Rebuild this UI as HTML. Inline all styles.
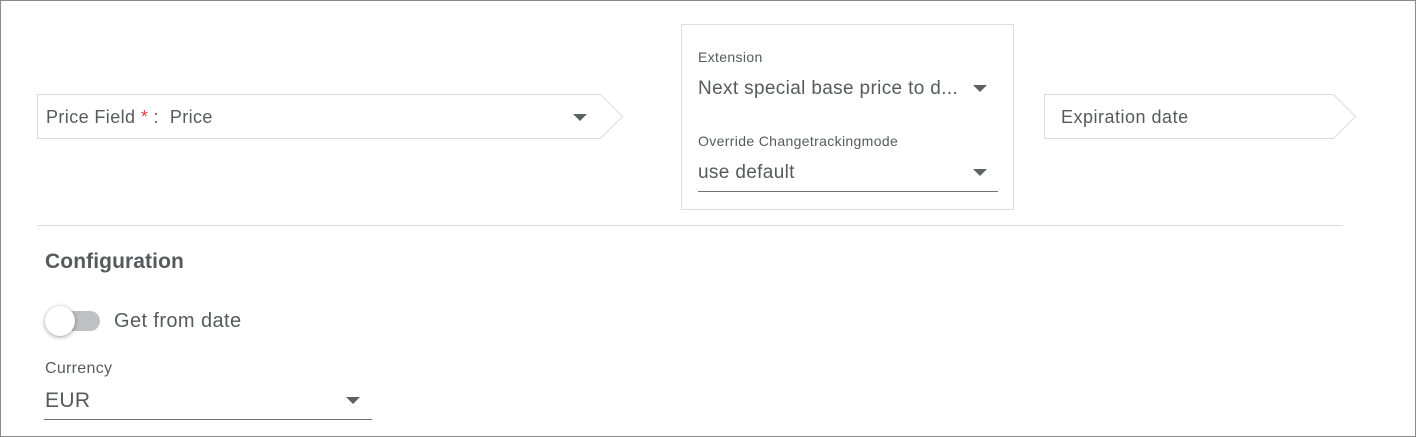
<!DOCTYPE html>
<html><head><style>
body{margin:0;width:1416px;height:437px;position:relative;font-family:"Liberation Sans",sans-serif;color:#555b5b;background:#fff;overflow:hidden}
.frame{position:absolute;left:0;top:0;width:1414px;height:435px;border:1px solid #8a8a8a}
.t{position:absolute;white-space:nowrap;letter-spacing:0.35px}
.caret{position:absolute;width:0;height:0;border-left:7px solid transparent;border-right:7px solid transparent;border-top:7px solid #5a6262}
</style></head><body>
<div class="frame"></div>
<svg width="1416" height="437" style="position:absolute;left:0;top:0">
<polygon points="37.5,94.5 600.5,94.5 622.5,116.5 600.5,138.5 37.5,138.5" fill="#fff" stroke="#dcdcdc"/>
<polygon points="1044.5,94.5 1333.5,94.5 1355.5,116.5 1333.5,138.5 1044.5,138.5" fill="#fff" stroke="#dcdcdc"/>
<rect x="681.5" y="24.5" width="332" height="185" fill="#fff" stroke="#dcdcdc"/>
<line x1="37" y1="225.5" x2="1343" y2="225.5" stroke="#dcdcdc"/>
<line x1="698" y1="191.5" x2="998" y2="191.5" stroke="#6a7272"/>
<line x1="44" y1="419.5" x2="372" y2="419.5" stroke="#6a7272"/>
</svg>
<div class="t" style="left:46px;top:107px;font-size:18px;letter-spacing:0.4px">Price Field <span style="color:#e04040">*</span> : &nbsp;Price</div>
<div class="caret" style="left:573px;top:114px"></div>
<div class="t" style="left:698px;top:49px;font-size:14px">Extension</div>
<div class="t" style="left:698px;top:78px;font-size:19px">Next special base price to d...</div>
<div class="caret" style="left:973px;top:85px"></div>
<div class="t" style="left:698px;top:133px;font-size:14px">Override Changetrackingmode</div>
<div class="t" style="left:698px;top:162px;font-size:19px">use default</div>
<div class="caret" style="left:973px;top:169px"></div>
<div class="t" style="left:1061px;top:107px;font-size:18px;letter-spacing:0.5px">Expiration date</div>
<div class="t" style="left:45px;top:250px;font-size:21px;font-weight:bold;letter-spacing:0.1px">Configuration</div>
<div style="position:absolute;left:48px;top:311px;width:52px;height:20px;border-radius:10px;background:#bdc1c1"></div>
<div style="position:absolute;left:45px;top:306px;width:30px;height:30px;border-radius:50%;background:#fff;box-shadow:0 1px 4px rgba(0,0,0,.4)"></div>
<div class="t" style="left:114px;top:310px;font-size:20px;letter-spacing:0.4px">Get from date</div>
<div class="t" style="left:45px;top:360px;font-size:16px;letter-spacing:0.3px">Currency</div>
<div class="t" style="left:45px;top:389px;font-size:21px">EUR</div>
<div class="caret" style="left:346px;top:397px"></div>
</body></html>
